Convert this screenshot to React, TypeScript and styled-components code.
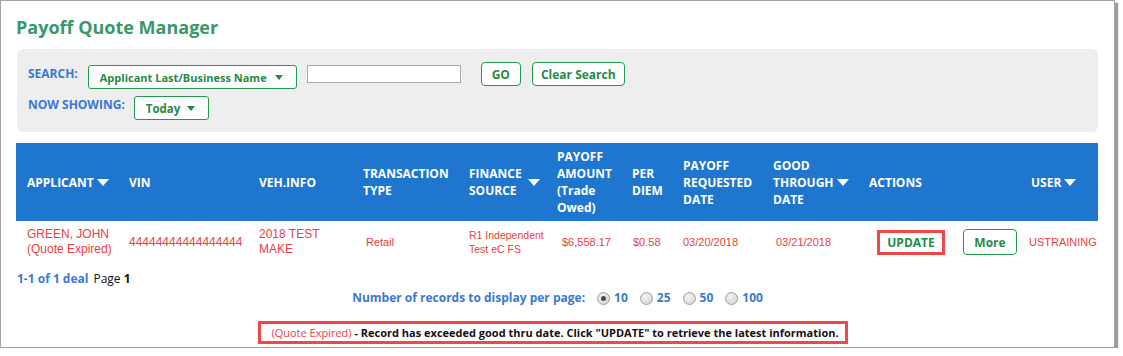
import styled, { createGlobalStyle } from 'styled-components'

const GlobalStyle = createGlobalStyle`
    html, body {
        margin: 0;
        padding: 0;
        background: #ffffff;
    }
    body {
        font-family: "Open Sans", "Liberation Sans", Arial, sans-serif;
    }
`

const Frame = styled.div`
    width: 1115px;
    height: 348px;
    border: 1px solid #a3a3a3;
    box-shadow: 3px 3px 1px #9c9c9c;
    background: #ffffff;
    padding: 0 15px;
    box-sizing: border-box;
`

const Title = styled.h1`
    margin: 0;
    padding-top: 15px;
    font-size: 18px;
    line-height: 22px;
    font-weight: 700;
    color: #3a9866;
`

const SearchPanel = styled.div`
    margin: 11px 1px 0 1px;
    background: #eeeeee;
    border-radius: 6px;
    padding: 13px 11px 12px 11px;
    display: flex;
    flex-direction: column;
    gap: 7px;
`

const Row = styled.div`
    display: flex;
    align-items: flex-start;
`

const Label = styled.span<{ $top: number; $gap: number }>`
    color: #3a78d4;
    font-size: 12px;
    font-weight: 700;
    line-height: 18px;
    margin-top: ${p => p.$top}px;
    margin-right: ${p => p.$gap}px;
    white-space: nowrap;
`

const Select = styled.div<{ $width: number; $top: number; $size: number }>`
    width: ${p => p.$width}px;
    height: 24px;
    margin-top: ${p => p.$top}px;
    box-sizing: border-box;
    background: #ffffff;
    border: 1px solid #1f9a4c;
    border-radius: 3px;
    padding: 0 13px 0 11px;
    display: flex;
    align-items: center;
    justify-content: space-between;
    color: #268a45;
    font-size: ${p => p.$size}px;
    font-weight: 700;
    white-space: nowrap;
`

const Caret = styled.span<{ $color: string }>`
    width: 0;
    height: 0;
    border-left: 4px solid transparent;
    border-right: 4px solid transparent;
    border-top: 5px solid ${p => p.$color};
    display: inline-block;
    flex-shrink: 0;
`

const HeadCaret = styled.span`
    width: 0;
    height: 0;
    border-left: 6px solid transparent;
    border-right: 6px solid transparent;
    border-top: 7px solid #ffffff;
    display: inline-block;
    margin-left: 3px;
    vertical-align: 1px;
`

const TextInput = styled.div`
    width: 154px;
    height: 18px;
    margin: 3px 20px 0 10px;
    box-sizing: border-box;
    background: #ffffff;
    border: 1px solid #a9a9a9;
`

const GreenButton = styled.div<{ $width: number }>`
    width: ${p => p.$width}px;
    height: 24px;
    box-sizing: border-box;
    background: #ffffff;
    border: 1px solid #1f9a4c;
    border-radius: 4px;
    display: flex;
    align-items: center;
    justify-content: center;
    color: #268a45;
    font-size: 12px;
    font-weight: 700;
    margin-right: 11px;
    white-space: nowrap;
`

const Table = styled.table`
    margin-top: 11px;
    width: 1082px;
    border-collapse: collapse;
    table-layout: fixed;
`

const HeadRow = styled.tr`
    background: #1e76cf;
    height: 78px;
`

const HeadCell = styled.th<{ $pl: number }>`
    padding: 0 0 0 ${p => p.$pl}px;
    text-align: left;
    vertical-align: middle;
    color: #ffffff;
    font-size: 12px;
    font-weight: 700;
    line-height: 17px;
`

const FinanceHead = styled.div`
    display: flex;
    align-items: center;
    gap: 3px;
`

const DataRow = styled.tr`
    height: 42px;
`

const Cell = styled.td<{ $pl: number; $size?: number }>`
    padding: 0 0 0 ${p => p.$pl}px;
    vertical-align: middle;
    color: #f03c3c;
    font-family: "Liberation Sans", Arial, sans-serif;
    font-size: ${p => p.$size ?? 12}px;
    line-height: ${p => Math.round((p.$size ?? 12) + 3)}px;
    white-space: nowrap;
`

const UpdateHighlight = styled.div`
    width: 68px;
    height: 25px;
    box-sizing: border-box;
    border: 3px solid #f04848;
    display: flex;
    align-items: center;
    justify-content: center;
    color: #268a45;
    font-family: "Open Sans", sans-serif;
    font-size: 12px;
    font-weight: 700;
    background: #ffffff;
`

const MoreButton = styled.div`
    width: 54px;
    height: 26px;
    box-sizing: border-box;
    border: 1px solid #1f9a4c;
    border-radius: 4px;
    display: flex;
    align-items: center;
    justify-content: center;
    color: #268a45;
    font-family: "Open Sans", sans-serif;
    font-size: 12px;
    font-weight: 700;
`

const DealCount = styled.div`
    margin: 8px 0 0 1px;
    font-size: 12px;
    line-height: 16px;
    color: #111111;
`

const BlueBold = styled.span`
    color: #3a78d4;
    font-weight: 700;
    margin-right: 5px;
`

const PerPage = styled.div`
    margin-top: 3px;
    display: flex;
    justify-content: center;
    align-items: center;
    font-size: 12px;
    line-height: 16px;
    font-weight: 700;
    color: #3a78d4;
`

const RadioOption = styled.label`
    display: inline-flex;
    align-items: center;
    gap: 4px;
    margin-left: 12px;
`

const Radio = styled.span<{ $checked?: boolean }>`
    width: 11px;
    height: 11px;
    border-radius: 50%;
    border: 1px solid #a0a0a0;
    background: radial-gradient(circle at 40% 35%, #f4f4f4 0%, #cfcfcf 100%);
    position: relative;
    display: inline-block;

    &::after {
        content: '';
        display: ${p => (p.$checked ? 'block' : 'none')};
        position: absolute;
        left: 3px;
        top: 3px;
        width: 5px;
        height: 5px;
        border-radius: 50%;
        background: #4a4a4a;
    }
`

const NoticeWrap = styled.div`
    margin-top: 15px;
    display: flex;
    justify-content: center;
    padding-right: 9px;
`

const Notice = styled.div`
    border: 3px solid #f04848;
    height: 23px;
    box-sizing: border-box;
    padding: 0 6px 0 10px;
    display: flex;
    align-items: center;
    font-size: 11px;
    font-weight: 700;
    color: #111111;
    white-space: nowrap;
`

const Expired = styled.span`
    color: #f03c3c;
    font-weight: 400;
`

const cols = [102, 130, 104, 106, 88, 75, 51, 90, 96, 94, 68, 78]

export default function App() {
  return (
    <>
      <GlobalStyle />
      <Frame>
        <Title>Payoff Quote Manager</Title>
        <SearchPanel>
          <Row>
            <Label $top={3} $gap={10}>SEARCH:</Label>
            <Select $width={209} $top={3} $size={11}>
              Applicant Last/Business Name <Caret $color="#268a45" />
            </Select>
            <TextInput />
            <GreenButton $width={40}>GO</GreenButton>
            <GreenButton $width={93}>Clear Search</GreenButton>
          </Row>
          <Row>
            <Label $top={0} $gap={9}>NOW SHOWING:</Label>
            <Select $width={75} $top={0} $size={11.5}>
              Today <Caret $color="#268a45" />
            </Select>
          </Row>
        </SearchPanel>
        <Table>
          <colgroup>
            {cols.map((w, i) => (
              <col key={i} style={{ width: w }} />
            ))}
          </colgroup>
          <thead>
            <HeadRow>
              <HeadCell $pl={11}>APPLICANT<HeadCaret /></HeadCell>
              <HeadCell $pl={11}>VIN</HeadCell>
              <HeadCell $pl={11}>VEH.INFO</HeadCell>
              <HeadCell $pl={11}>TRANSACTION<br />TYPE</HeadCell>
              <HeadCell $pl={11}>
                <FinanceHead>
                  <span>FINANCE<br />SOURCE</span>
                  <HeadCaret />
                </FinanceHead>
              </HeadCell>
              <HeadCell $pl={11}>PAYOFF<br />AMOUNT<br />(Trade<br />Owed)</HeadCell>
              <HeadCell $pl={11}>PER<br />DIEM</HeadCell>
              <HeadCell $pl={11}>PAYOFF<br />REQUESTED<br />DATE</HeadCell>
              <HeadCell $pl={11}>GOOD<br />THROUGH<HeadCaret /><br />DATE</HeadCell>
              <HeadCell $pl={11} colSpan={2}>ACTIONS</HeadCell>
              <HeadCell $pl={11}>USER<HeadCaret /></HeadCell>
            </HeadRow>
          </thead>
          <tbody>
            <DataRow>
              <Cell $pl={11}>GREEN, JOHN<br />(Quote Expired)</Cell>
              <Cell $pl={11}>44444444444444444</Cell>
              <Cell $pl={11}>2018 TEST<br />MAKE</Cell>
              <Cell $pl={14} $size={11}>Retail</Cell>
              <Cell $pl={11} $size={10.5}>R1 Independent<br />Test eC FS</Cell>
              <Cell $pl={16} $size={11}>$6,558.17</Cell>
              <Cell $pl={12} $size={11}>$0.58</Cell>
              <Cell $pl={11} $size={11}>03/20/2018</Cell>
              <Cell $pl={14} $size={11}>03/21/2018</Cell>
              <Cell $pl={19}><UpdateHighlight>UPDATE</UpdateHighlight></Cell>
              <Cell $pl={11}><MoreButton>More</MoreButton></Cell>
              <Cell $pl={9} $size={11}>USTRAINING</Cell>
            </DataRow>
          </tbody>
        </Table>
        <DealCount>
          <BlueBold>1-1 of 1 deal</BlueBold>Page <b>1</b>
        </DealCount>
        <PerPage>
          Number of records to display per page:
          <RadioOption><Radio $checked />10</RadioOption>
          <RadioOption><Radio />25</RadioOption>
          <RadioOption><Radio />50</RadioOption>
          <RadioOption><Radio />100</RadioOption>
        </PerPage>
        <NoticeWrap>
          <Notice>
            <Expired>(Quote Expired)</Expired>&nbsp;- Record has exceeded good thru date. Click "UPDATE" to retrieve the latest information.
          </Notice>
        </NoticeWrap>
      </Frame>
    </>
  )
}
